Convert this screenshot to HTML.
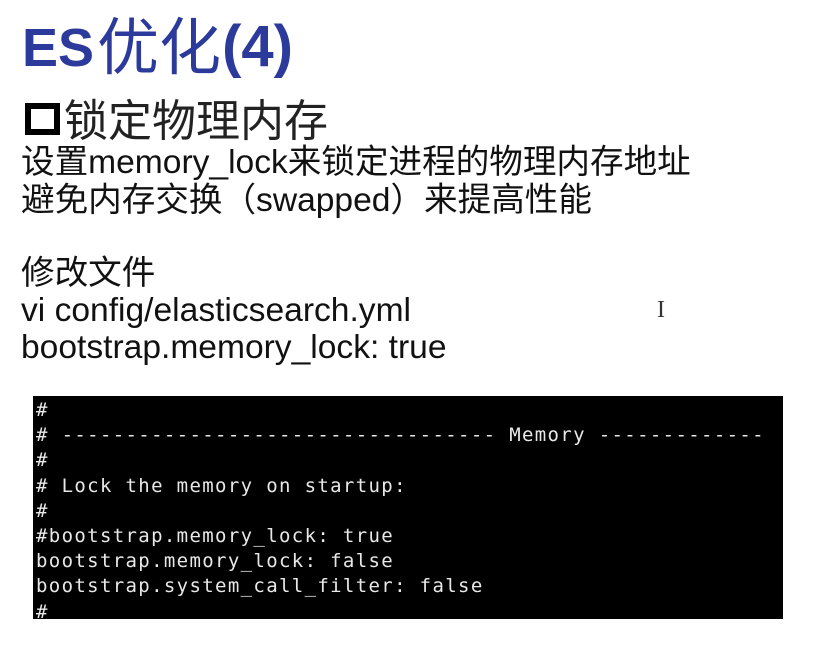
<!DOCTYPE html>
<html><head><meta charset="utf-8"><style>
body{margin:0;width:831px;height:646px;background:#fff;position:relative;overflow:hidden;font-family:"Liberation Sans","Noto Sans CJK SC",sans-serif;}
.a{position:absolute;white-space:nowrap;line-height:1;}
.t{left:22px;top:18px;font-size:54px;font-weight:bold;color:#2b3a9b;}
.t .c{font-weight:normal;font-size:62px;vertical-align:-3px;margin-left:3px;margin-right:1px;}
.t .n{font-size:58px;}
.h{left:25px;top:100px;font-size:44px;color:#222;}
.box{display:inline-block;width:35px;height:32px;border:6px solid #000;box-sizing:border-box;margin-right:4px;vertical-align:1px;}
.p{left:21px;font-size:33.6px;color:#111;}
.term{position:absolute;left:33px;top:396px;width:750px;height:223px;background:#000;overflow:hidden;}
.term pre{margin:0;padding:2px 0 0 3px;font-family:"DejaVu Sans Mono",monospace;font-size:19px;line-height:25.2px;letter-spacing:1.35px;color:#e8e8e8;}
</style></head><body>
<div class="a t">ES<span class="c">优化</span><span class="n">(4)</span></div>
<div class="a h"><span class="box"></span>锁定物理内存</div>
<div class="a p" style="top:146px">设置memory_lock来锁定进程的物理内存地址</div>
<div class="a p" style="top:184px">避免内存交换（swapped）来提高性能</div>
<div class="a p" style="top:257px">修改文件</div>
<div class="a p" style="top:294px">vi config/elasticsearch.yml</div>
<div class="a p" style="top:331px">bootstrap.memory_lock: true</div>
<div class="a" style="left:657px;top:298px;font-size:24px;color:#333;font-family:'Liberation Serif',serif">I</div>
<div class="term"><pre>#
# ---------------------------------- Memory -------------
#
# Lock the memory on startup:
#
#bootstrap.memory_lock: true
bootstrap.memory_lock: false
bootstrap.system_call_filter: false
#</pre></div>
</body></html>
